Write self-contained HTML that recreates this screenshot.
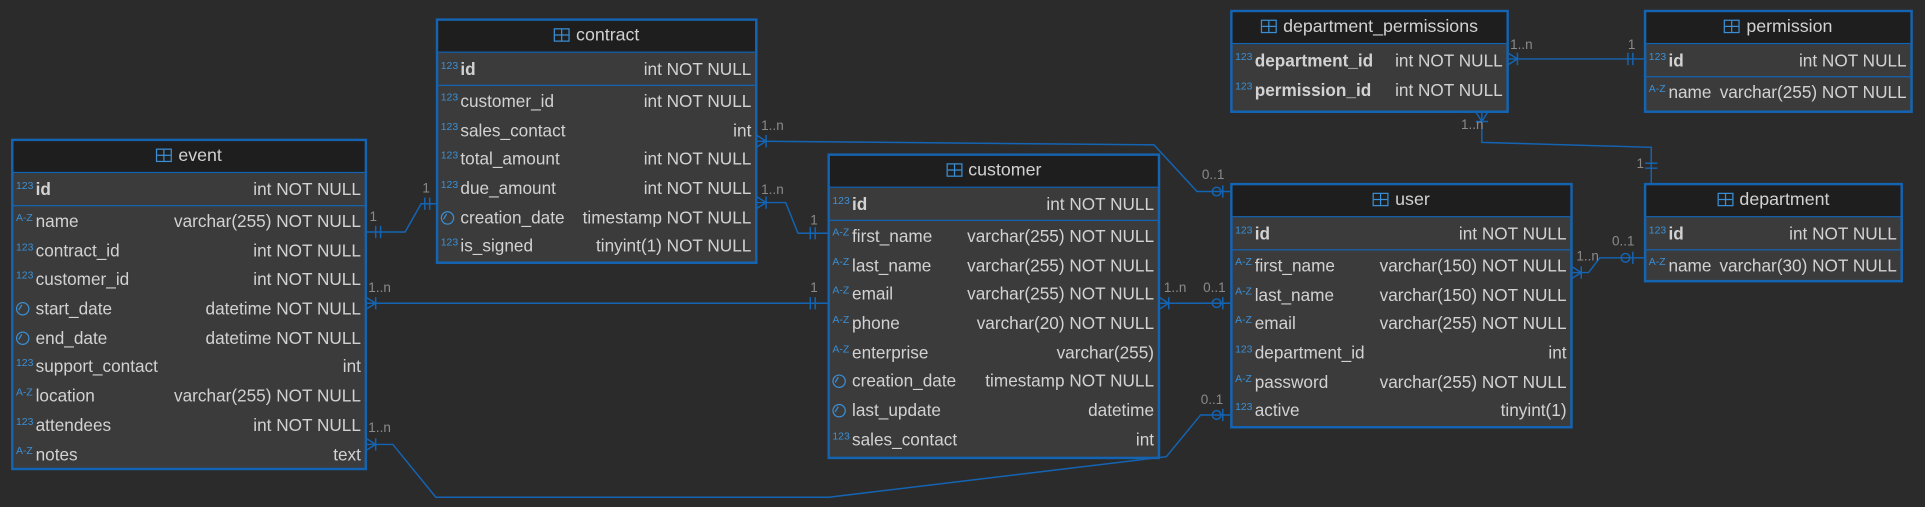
<!DOCTYPE html>
<html><head><meta charset="utf-8"><style>
html,body{margin:0;padding:0;background:#2b2b2b;width:1925px;height:507px;overflow:hidden}
#w{position:absolute;left:0;top:0;width:1568px;height:413px;transform:scale(1.2277);transform-origin:0 0;font-family:"Liberation Sans",sans-serif;color:#d2d2d2;font-size:14px}
.t{position:absolute;background:#3b3b3b;border:2px solid #1464b4;box-sizing:border-box}
.h{height:25px;background:#1e1e1e;border-bottom:1px solid #1464b4;text-align:center;line-height:25px;font-size:14.5px}
.h i{display:inline-block;width:11px;height:9px;border:1px solid #3a8fd6;margin-right:5px;vertical-align:-1px;background:linear-gradient(#3a8fd6,#3a8fd6) 0 3.5px/100% 1px no-repeat,linear-gradient(#3a8fd6,#3a8fd6) 5px 0/1px 100% no-repeat}
.pk{border-bottom:1px solid #1464b4;padding:1px 0 1px}
.r{height:23.7px;line-height:23.7px;position:relative;padding-left:18px;white-space:nowrap}
.pk .r{height:24px;line-height:24px}
.r b{font-weight:bold}
.r s{text-decoration:none;position:absolute;right:3px;top:0}
.r u{text-decoration:none;position:absolute;left:2px;top:-3px;font-size:8.5px;color:#3a8fd6}
.r u.c{width:11px;height:11px;border:1.3px solid #3a8fd6;border-radius:50%;top:6px;left:2px;box-sizing:border-box;font-size:0}
.r u.c:after{content:"";position:absolute;left:2px;top:1px;width:1.3px;height:5px;background:#3a8fd6;transform:rotate(30deg)}
.bd{padding-top:1px}
.l{position:absolute;font-size:11px;color:#8a8a8a}
</style></head><body><div id="w">
<svg width="1568" height="413" style="position:absolute;left:0;top:0" fill="none" stroke="#1464b4" stroke-width="1.2">
<path d="M298 189H330L343 166H355"/><path d="M306 184v10M310 184v10M346 161v10M350 161v10"/>
<path d="M298 247H674"/><path d="M298 242l8 5l-8 5M306 242v10M660 242v10M664 242v10"/>
<path d="M616 115L940 118L975 156H1002"/><path d="M616 110l8 5l-8 5M624 110v10"/><circle cx="991" cy="156" r="3.5"/><path d="M996 151v10"/>
<path d="M616 165H640L650 190H674"/><path d="M616 160l8 5l-8 5M624 160v10M660 185v10M664 185v10"/>
<path d="M944 247H1002"/><path d="M944 242l8 5l-8 5M952 242v10"/><circle cx="991" cy="247" r="3.5"/><path d="M996 242v10"/>
<path d="M298 362H320L355 405H675L950 372L978 338H1002"/><path d="M298 357l8 5l-8 5M306 357v10"/><circle cx="991" cy="338" r="3.5"/><path d="M996 333v10"/>
<path d="M1280 222H1294L1303 210H1339"/><path d="M1280 217l8 5l-8 5M1288 217v10"/><circle cx="1324" cy="210" r="3.5"/><path d="M1330 205v10"/>
<path d="M1228 48H1339"/><path d="M1228 43l8 5l-8 5M1236 43v10M1326 43v10M1330 43v10"/>
<path d="M1207 91V116L1345 120V149"/><path d="M1202 91l5 8l5-8M1202 99h10M1340 133h10M1340 137h10"/>
</svg>
<div class="l" style="left:301px;top:171px">1</div><div class="l" style="left:344px;top:148px">1</div>
<div class="l" style="left:300px;top:229px">1..n</div><div class="l" style="left:660px;top:229px">1</div>
<div class="l" style="left:620px;top:97px">1..n</div><div class="l" style="left:979px;top:137px">0..1</div>
<div class="l" style="left:620px;top:149px">1..n</div><div class="l" style="left:660px;top:174px">1</div>
<div class="l" style="left:948px;top:229px">1..n</div><div class="l" style="left:980px;top:229px">0..1</div>
<div class="l" style="left:300px;top:343px">1..n</div><div class="l" style="left:978px;top:320px">0..1</div>
<div class="l" style="left:1284px;top:203px">1..n</div><div class="l" style="left:1313px;top:191px">0..1</div>
<div class="l" style="left:1230px;top:31px">1..n</div><div class="l" style="left:1326px;top:31px">1</div>
<div class="l" style="left:1190px;top:96px">1..n</div><div class="l" style="left:1333px;top:128px">1</div>

<div class="t" style="left:9px;top:113px;width:290px;height:270px"><div class="h"><i></i>event</div>
<div class="pk"><div class="r"><u>123</u><b>id</b><s>int NOT NULL</s></div></div><div class="bd">
<div class="r"><u>A-Z</u>name<s>varchar(255) NOT NULL</s></div>
<div class="r"><u>123</u>contract_id<s>int NOT NULL</s></div>
<div class="r"><u>123</u>customer_id<s>int NOT NULL</s></div>
<div class="r"><u class="c"></u>start_date<s>datetime NOT NULL</s></div>
<div class="r"><u class="c"></u>end_date<s>datetime NOT NULL</s></div>
<div class="r"><u>123</u>support_contact<s>int</s></div>
<div class="r"><u>A-Z</u>location<s>varchar(255) NOT NULL</s></div>
<div class="r"><u>123</u>attendees<s>int NOT NULL</s></div>
<div class="r"><u>A-Z</u>notes<s>text</s></div></div></div>

<div class="t" style="left:355px;top:15px;width:262px;height:200px"><div class="h"><i></i>contract</div>
<div class="pk"><div class="r"><u>123</u><b>id</b><s>int NOT NULL</s></div></div><div class="bd">
<div class="r"><u>123</u>customer_id<s>int NOT NULL</s></div>
<div class="r"><u>123</u>sales_contact<s>int</s></div>
<div class="r"><u>123</u>total_amount<s>int NOT NULL</s></div>
<div class="r"><u>123</u>due_amount<s>int NOT NULL</s></div>
<div class="r"><u class="c"></u>creation_date<s>timestamp NOT NULL</s></div>
<div class="r"><u>123</u>is_signed<s>tinyint(1) NOT NULL</s></div></div></div>

<div class="t" style="left:674px;top:125px;width:271px;height:249px"><div class="h"><i></i>customer</div>
<div class="pk"><div class="r"><u>123</u><b>id</b><s>int NOT NULL</s></div></div><div class="bd">
<div class="r"><u>A-Z</u>first_name<s>varchar(255) NOT NULL</s></div>
<div class="r"><u>A-Z</u>last_name<s>varchar(255) NOT NULL</s></div>
<div class="r"><u>A-Z</u>email<s>varchar(255) NOT NULL</s></div>
<div class="r"><u>A-Z</u>phone<s>varchar(20) NOT NULL</s></div>
<div class="r"><u>A-Z</u>enterprise<s>varchar(255)</s></div>
<div class="r"><u class="c"></u>creation_date<s>timestamp NOT NULL</s></div>
<div class="r"><u class="c"></u>last_update<s>datetime</s></div>
<div class="r"><u>123</u>sales_contact<s>int</s></div></div></div>

<div class="t" style="left:1002px;top:149px;width:279px;height:200px"><div class="h"><i></i>user</div>
<div class="pk"><div class="r"><u>123</u><b>id</b><s>int NOT NULL</s></div></div><div class="bd">
<div class="r"><u>A-Z</u>first_name<s>varchar(150) NOT NULL</s></div>
<div class="r"><u>A-Z</u>last_name<s>varchar(150) NOT NULL</s></div>
<div class="r"><u>A-Z</u>email<s>varchar(255) NOT NULL</s></div>
<div class="r"><u>123</u>department_id<s>int</s></div>
<div class="r"><u>A-Z</u>password<s>varchar(255) NOT NULL</s></div>
<div class="r"><u>123</u>active<s>tinyint(1)</s></div></div></div>

<div class="t" style="left:1002px;top:8px;width:227px;height:84px"><div class="h"><i></i>department_permissions</div>
<div class="pk" style="padding-bottom:6px"><div class="r"><u>123</u><b>department_id</b><s>int NOT NULL</s></div>
<div class="r"><u>123</u><b>permission_id</b><s>int NOT NULL</s></div></div></div>

<div class="t" style="left:1339px;top:8px;width:219px;height:84px"><div class="h"><i></i>permission</div>
<div class="pk"><div class="r"><u>123</u><b>id</b><s>int NOT NULL</s></div></div><div class="bd">
<div class="r"><u>A-Z</u>name<s>varchar(255) NOT NULL</s></div></div></div>

<div class="t" style="left:1339px;top:149px;width:211px;height:81px"><div class="h"><i></i>department</div>
<div class="pk"><div class="r"><u>123</u><b>id</b><s>int NOT NULL</s></div></div><div class="bd">
<div class="r"><u>A-Z</u>name<s>varchar(30) NOT NULL</s></div></div></div>
</div></body></html>
